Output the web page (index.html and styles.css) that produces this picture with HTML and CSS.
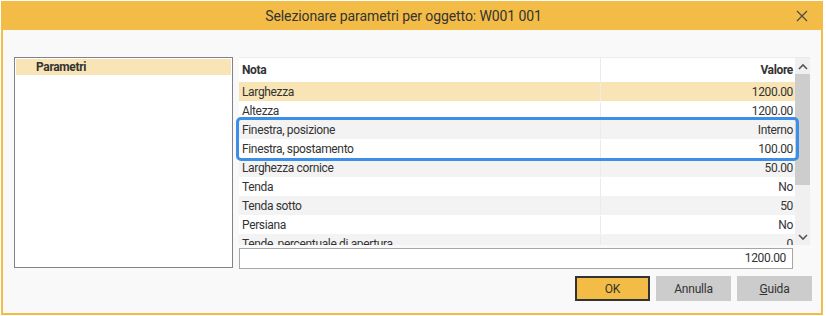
FILE: index.html
```html
<!DOCTYPE html>
<html lang="it">
<head>
<meta charset="utf-8">
<title>Selezionare parametri</title>
<link rel="stylesheet" href="styles.css">
</head>
<body>
<div class="dialog">
  <div class="titlebar">
    <div class="title">Selezionare parametri per oggetto: W001 001</div>
    <div class="close" aria-label="Chiudi">
      <svg width="12" height="12" viewBox="0 0 12 12"><path d="M1 1 L11 11 M11 1 L1 11" stroke="#4a4a4a" stroke-width="1.2" fill="none"/></svg>
    </div>
  </div>
  <div class="content">
    <div class="main">
      <div class="tree">
        <div class="tree-item">Parametri</div>
      </div>
      <div class="right">
        <div class="grid-wrap">
          <div class="grid">
            <div class="row head"><div class="c1">Nota</div><div class="c2">Valore</div></div>
            <div class="rows">
              <div class="row sel"><div class="c1">Larghezza</div><div class="c2">1200.00</div></div>
              <div class="row"><div class="c1">Altezza</div><div class="c2">1200.00</div></div>
              <div class="row alt"><div class="c1">Finestra, posizione</div><div class="c2">Interno</div></div>
              <div class="row"><div class="c1">Finestra, spostamento</div><div class="c2">100.00</div></div>
              <div class="row alt"><div class="c1">Larghezza cornice</div><div class="c2">50.00</div></div>
              <div class="row"><div class="c1">Tenda</div><div class="c2">No</div></div>
              <div class="row alt"><div class="c1">Tenda sotto</div><div class="c2">50</div></div>
              <div class="row"><div class="c1">Persiana</div><div class="c2">No</div></div>
              <div class="row alt"><div class="c1">Tende, percentuale di apertura</div><div class="c2">0</div></div>
            </div>
            <div class="focus"></div>
          </div>
          <div class="scrollbar">
            <div class="arrow">
              <svg width="10" height="7" viewBox="0 0 10 7"><path d="M1 6 L5 2 L9 6" stroke="#555" stroke-width="1.6" fill="none"/></svg>
            </div>
            <div class="track"><div class="thumb"></div></div>
            <div class="arrow">
              <svg width="10" height="7" viewBox="0 0 10 7"><path d="M1 1 L5 5 L9 1" stroke="#555" stroke-width="1.6" fill="none"/></svg>
            </div>
          </div>
        </div>
        <div class="input">1200.00</div>
      </div>
    </div>
    <div class="buttons">
      <button class="btn ok">OK</button>
      <button class="btn">Annulla</button>
      <button class="btn"><u>G</u>uida</button>
    </div>
  </div>
</div>
</body>
</html>
```

FILE: styles.css
```css
html, body {
  margin: 0;
  padding: 0;
  background: #ffffff;
}
body {
  font-family: "Roboto", "Noto Sans", sans-serif;
  font-size: 12px;
  letter-spacing: -0.35px;
  color: #333333;
}
.dialog {
  margin: 1px 0 0 1px;
  width: 822px;
  height: 314px;
  box-sizing: border-box;
  border: 2px solid #f3bc47;
  border-top: 0;
  background: #f9f9f9;
  display: flex;
  flex-direction: column;
}
.titlebar {
  height: 29px;
  flex: none;
  background: #f3bc47;
  display: flex;
  align-items: center;
}
.title {
  flex: 1;
  text-align: center;
  font-size: 14px;
  letter-spacing: -0.1px;
  color: #333;
  padding-left: 10px;
  padding-top: 1px;
}
.close {
  width: 16px;
  height: 16px;
  margin-right: 11px;
  display: flex;
  align-items: center;
  justify-content: center;
}
.content {
  flex: 1;
  display: flex;
  flex-direction: column;
  padding: 27px 11px 0 11px;
}
.main {
  display: flex;
  gap: 6px;
  height: 212px;
}
.tree {
  width: 219px;
  height: 211px;
  box-sizing: border-box;
  border: 1px solid #80848a;
  background: #ffffff;
  padding: 1px;
}
.tree-item {
  height: 16px;
  line-height: 16px;
  background: #f8e4b4;
  font-weight: bold;
  padding-left: 20px;
}
.right {
  width: 571px;
  display: flex;
  flex-direction: column;
  gap: 3px;
}
.grid-wrap {
  display: flex;
  height: 188px;
  border-top: 1px solid #ebebeb;
  box-sizing: border-box;
}
.grid {
  position: relative;
  width: 556px;
  background: #ffffff;
  display: flex;
  flex-direction: column;
}
.rows {
  flex: 1;
  overflow: hidden;
}
.row {
  display: flex;
  height: 19px;
  box-sizing: border-box;
  padding-top: 1px;
  line-height: 18px;
}
.row.head {
  height: 24px;
  padding-top: 0;
  line-height: 24px;
  font-weight: bold;
}
.row.sel { background: #f8e4b4; }
.row.alt { background: #f3f3f3; }
.c1 {
  width: 358px;
  padding-left: 3px;
  border-right: 1px solid #ebebeb;
  white-space: nowrap;
  overflow: hidden;
}
.c2 {
  flex: 1;
  text-align: right;
  padding-right: 2px;
}
.focus {
  position: absolute;
  left: -3px;
  top: 59px;
  width: 563px;
  height: 44px;
  box-sizing: border-box;
  border: 3px solid #3d8ee6;
  border-radius: 5px;
}
.scrollbar {
  width: 15px;
  background: #f0f0f0;
  display: flex;
  flex-direction: column;
}
.arrow {
  height: 16px;
  display: flex;
  align-items: center;
  justify-content: center;
}
.track {
  flex: 1;
}
.thumb {
  height: 111px;
  background: #cdcdcd;
}
.input {
  width: 554px;
  height: 21px;
  box-sizing: border-box;
  border: 1px solid #a6a6a6;
  background: #ffffff;
  text-align: right;
  line-height: 19px;
  padding-right: 6px;
}
.buttons {
  display: flex;
  justify-content: flex-end;
  gap: 6px;
  margin-top: 7px;
  margin-right: -2px;
}
.btn {
  width: 75px;
  height: 25px;
  box-sizing: border-box;
  border: 0;
  background: #cccccc;
  font-family: inherit;
  font-size: 12px;
  letter-spacing: -0.2px;
  color: #333;
  padding: 0;
}
.btn.ok {
  background: #f3bc47;
  border: 2px solid #333333;
}
```
